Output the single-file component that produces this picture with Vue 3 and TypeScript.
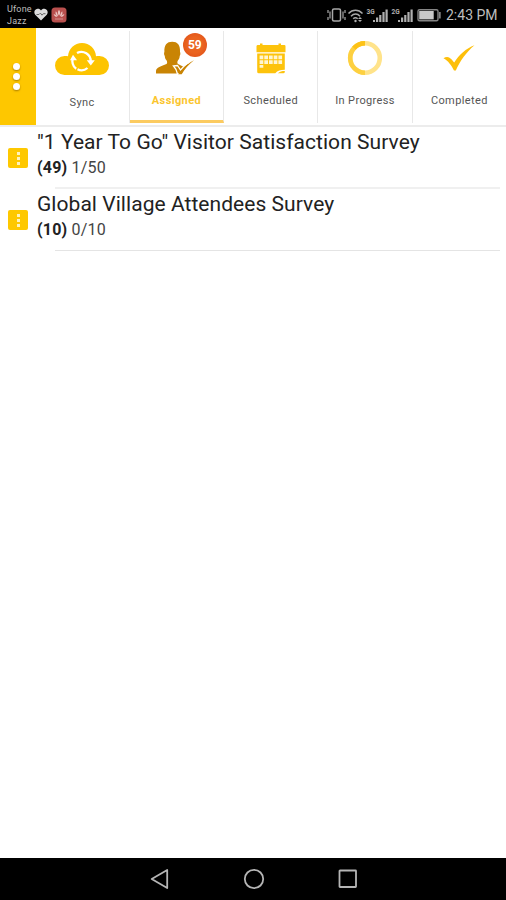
<script setup lang="ts">
interface Tab {
  id: string
  label: string
  badge?: number
}
interface Survey {
  title: string
  total: number
  progress: string
}

const active = 'assigned'
const tabs: Tab[] = [
  { id: 'sync', label: 'Sync' },
  { id: 'assigned', label: 'Assigned', badge: 59 },
  { id: 'scheduled', label: 'Scheduled' },
  { id: 'progress', label: 'In Progress' },
  { id: 'completed', label: 'Completed' },
]
const surveys: Survey[] = [
  { title: '"1 Year To Go" Visitor Satisfaction Survey', total: 49, progress: '1/50' },
  { title: 'Global Village Attendees Survey', total: 10, progress: '0/10' },
]
</script>

<template>
  <div class="screen">
    <header class="status">
      <div class="carriers"><span>Ufone</span><span>Jazz</span></div>
      <svg class="heart" width="14" height="13" viewBox="0 0 14 13">
        <path d="M7 12.5 1.2 6.8C-.6 4.5.5 1.2 3.5.8 5 .6 6.2 1.3 7 2.5 7.8 1.3 9 .6 10.5.8c3 .4 4.1 3.7 2.3 6z" fill="#dcdcdc" />
        <path d="M2.500 6.500h2.500l1.400-1.400L8 7.200l1.300-1.500h2.200" fill="none" stroke="#666" stroke-width="1" />
      </svg>
      <svg class="app" width="16" height="16" viewBox="0 0 16 16">
        <rect x=".5" y=".5" width="15" height="15" rx="3.5" fill="#b9504e" />
        <path d="M8 2.800c1.500 1.800 1.500 3.800 0 6-1.500-2.200-1.500-4.200 0-6zM4.800 4.200C6 5.500 6.800 7 7 9.200 4.800 8.500 4 6.500 4.800 4.200zM11.200 4.200C10 5.500 9.200 7 9 9.200c2.200-.7 3-2.700 2.200-5zM2.700 7c1.500.4 2.800 1.200 3.800 2.800C4.500 10 3 9 2.700 7zM13.300 7c-1.500.4-2.800 1.200-3.800 2.800 2 .2 3.500-.8 3.800-2.800z" fill="#edc5c2" />
        <path d="M4 12h8" stroke="#d38e8b" />
      </svg>
      <div class="spacer"></div>
      <svg class="system" width="116" height="18" viewBox="0 0 116 18">
        <g fill="none" stroke="#a8a8a8" stroke-width="1.500">
          <rect x="5.500" y="3" width="8" height="12" rx="1.500" />
          <path d="M3 5.500v7M1 4v3M1 11v3M16 5.500v7M18 4v3M18 11v3" stroke-width="1.200" />
          <path d="M21.500 7.500c4-4.200 10-4.200 14 0M24 10.200c2.800-2.800 6.500-2.800 9 0M26.200 12.800c1.500-1.500 3-1.500 4.500 0" />
        </g>
        <g fill="#b0b0b0">
          <circle cx="28.500" cy="15" r="1.200" />
          <path d="m31 13 2-2 2 2zM31 14h4l-2 2z" />
          <path d="M46 14h2v2h-2zM49 11.500h2.200V16H49zM52.200 9h2.200v7h-2.200zM55.400 6h2.200v10h-2.200zM58.500 3.500h2.200V16h-2.200z" />
          <path d="M71 14h2v2h-2zM74 11.500h2.200V16H74zM77.200 9h2.200v7h-2.200zM80.400 6h2.200v10h-2.200zM83.500 3.500h2.200V16h-2.200z" />
          <text x="39.500" y="8">3G</text>
          <text x="64.500" y="8">2G</text>
        </g>
        <rect x="91" y="3.700" width="20" height="11" rx="1.500" fill="none" stroke="#858585" stroke-width="1.400" />
        <rect x="92.200" y="5" width="14.500" height="8.400" fill="#c9c9c9" />
        <path d="M112.800 6v6.500" stroke="#858585" stroke-width="1.800" />
      </svg>
      <span class="clock">2:43 PM</span>
    </header>

    <nav class="toolbar">
      <button class="menu" aria-label="Menu"><i></i><i></i><i></i></button>
      <div v-for="tab in tabs" :key="tab.id" class="tab" :class="[tab.id, { active: tab.id === active }]">
        <div class="icon">
          <svg v-if="tab.id === 'sync'" width="54" height="34" viewBox="0 0 54 34">
            <path d="M9.500 33a9.500 9.500 0 0 1 0-19c1.200-.2 2.500 0 3.500.3C13.500 6.500 19.500 1 27 1s13.500 5.500 14 13.300c1-.3 2.300-.5 3.500-.3a9.500 9.500 0 0 1 0 19z" fill="#fdc400" />
            <g fill="none" stroke="#fff" stroke-width="2.300">
              <path d="M22 11.100a9.200 9.200 0 0 1 13.700 8.400" />
              <path d="M18.200 15.600a9.200 9.200 0 0 0 3 11.200M22.500 27.300a9.200 9.200 0 0 0 10-1.300" />
            </g>
            <path d="M31.800 18.200h8l-4 5.200zM15 18.200h7l-4-5.500z" fill="#fff" />
          </svg>
          <svg v-else-if="tab.id === 'assigned'" width="38" height="34" viewBox="0 0 38 34">
            <path d="M0 32.500v-2.300c0-4 5.500-5 10.500-7.200 1-1 .8-2.500-.2-4-1-.8-1.400-2.500-1.500-4-.8-1-1-3.200-.4-4C8 4 10.800.8 16.200.8S24.500 4 24 11c.6.800.5 3-.3 4-.1 1.500-.5 3.200-1.500 4-1 1.500-1.200 3-.2 4l5 2.500-1 7z" fill="#c98404" />
            <path d="m17.500 25 4-.5 3 4.500c3.500-4.200 8-7.500 13-9.500-5 4-8.500 8.500-11.500 13.500h-4.500c-.8-3.500-2-6-4-8z" fill="#c98404" stroke="#fff" stroke-width="1.300" />
            <path d="m25 29.800c4-4.500 8-8 13-10.500-5.500 4.200-9 8.500-12.300 14h-3.500z" fill="#c98404" />
          </svg>
          <svg v-else-if="tab.id === 'scheduled'" width="30" height="31" viewBox="0 0 30 31">
            <path d="M1.500 2H4V.5h2.500V2h16V.5H25V2h3a1.300 1.300 0 0 1 1.500 1.300v5.900H.5V3.300A1.300 1.300 0 0 1 1.500 2zM1.200 10.500h27.600v16.300c-4.300 0-7.300 1-9.500 3.400H2.700a1.500 1.500 0 0 1-1.500-1.500z" fill="#fdc30c" />
            <path d="M28.800 28c-2.800 0-5 .5-7 2.200h5.500a1.500 1.500 0 0 0 1.500-1.500z" fill="#fdc30c" />
            <path d="M8.300 12.500h3.700v3.700H8.300zM13 12.500h3.700v3.700H13zM17.700 12.500h3.700v3.700h-3.700zM22.400 12.500h3.700v3.700h-3.700zM3.600 17.200h3.700v3.700H3.600zM8.300 17.200h3.700v3.700H8.300zM13 17.200h3.700v3.700H13zM17.700 17.200h3.700v3.700h-3.700zM22.400 17.200h3.700v3.700h-3.700zM3.600 12.500h3.700v3.700H3.600zM3.600 21.900h3.700v2.800H3.600z" fill="#fff5d2" />
          </svg>
          <svg v-else-if="tab.id === 'progress'" width="36" height="36" viewBox="0 0 36 36">
            <circle cx="18" cy="18" r="14.800" fill="none" stroke="#ffe38a" stroke-width="4.600" />
            <path d="M18 32.800A14.800 14.800 0 0 1 18 3.200" fill="none" stroke="#fdd040" stroke-width="4.600" />
            <path d="M7 8.100A14.800 14.800 0 0 1 18 3.200" fill="none" stroke="#fdc216" stroke-width="4.600" />
          </svg>
          <svg v-else width="32" height="26" viewBox="0 0 32 26">
            <path d="M.5 13.200c2-1.400 4.500-1.600 6-.5 1.800 1.200 3.200 2.800 4.700 4.800C16 10 23 3.500 31.500.3 23.500 7 17 16 12.800 25.500H11C8.500 20.500 5 15.500.5 13.200z" fill="#fdbf0a" />
          </svg>
        </div>
        <span v-if="tab.badge" class="badge">{{ tab.badge }}</span>
        <span class="label">{{ tab.label }}</span>
      </div>
    </nav>

    <main class="list">
      <article v-for="survey in surveys" :key="survey.title" class="row">
        <div class="handle"><i></i><i></i><i></i></div>
        <div class="body">
          <h2>{{ survey.title }}</h2>
          <p><b>({{ survey.total }})</b> {{ survey.progress }}</p>
        </div>
      </article>
    </main>

    <footer class="navbar">
      <svg width="20" height="22" viewBox="0 0 20 22"><path d="M17.200 2v18L1.700 11z" /></svg>
      <svg width="22" height="22" viewBox="0 0 22 22"><circle cx="11" cy="11" r="9.200" /></svg>
      <svg width="20" height="20" viewBox="0 0 20 20"><rect x="1.500" y="1.500" width="16.500" height="16.500" rx=".5" /></svg>
    </footer>
  </div>
</template>

<style>
body {
  margin: 0;
}
</style>

<style scoped>
.screen {
  display: flex;
  flex-direction: column;
  width: 506px;
  height: 900px;
  overflow: hidden;
  background: #fff;
  font-family: Roboto, 'Liberation Sans', sans-serif;
}
.status {
  box-sizing: border-box;
  display: flex;
  flex: 0 0 28px;
  align-items: center;
  padding: 2px 8px 0 7px;
  background: #000;
  color: #bdbdbd;
}
.carriers {
  display: flex;
  flex-direction: column;
  width: 27px;
  font-size: 9px;
  line-height: 12.5px;
  letter-spacing: 0.2px;
}
.heart {
  margin-top: -1px;
}
.app {
  margin-left: 3px;
  margin-top: -1px;
}
.spacer {
  flex: 1;
}
.system {
  margin-top: -1px;
  margin-right: 3px;
}
.system text {
  font-size: 6.5px;
  font-weight: 700;
}
.clock {
  width: 52px;
  margin-top: -1px;
  font-size: 14px;
  white-space: nowrap;
}
.toolbar {
  display: flex;
  box-sizing: border-box;
  flex: 0 0 99px;
  border-bottom: 2px solid #ececec;
}
.menu {
  display: flex;
  flex: 0 0 35.5px;
  flex-direction: column;
  align-items: center;
  justify-content: center;
  gap: 3px;
  padding: 0 2px 0 0;
  border: 0;
  background: #fec700;
}
.menu i {
  width: 7px;
  height: 7px;
  border-radius: 50%;
  background: #fff;
  box-shadow: 0 1px 2px #a87b00;
}
.tab {
  position: relative;
  display: flex;
  box-sizing: border-box;
  flex: 1;
  flex-direction: column;
  align-items: center;
  height: 92px;
  margin-top: 3px;
  border-right: 1px solid #e8e8e8;
}
.tab:last-child {
  border-right: 0;
}
.icon {
  display: flex;
  align-items: center;
  justify-content: center;
  height: 54px;
}
.sync .icon {
  height: 56px;
}
.assigned .icon {
  height: 53px;
  padding-right: 2px;
}
.active {
  border-bottom: 3px solid #fccb60;
}
.badge {
  position: absolute;
  top: 2px;
  left: 53px;
  width: 24px;
  height: 24px;
  border-radius: 50%;
  background: radial-gradient(circle, #ea6420 0 45%, #de4a16 100%);
  color: #fff;
  font-size: 12px;
  font-weight: 700;
  line-height: 24px;
  text-align: center;
}
.label {
  margin-top: 9px;
  color: #555;
  font-size: 11px;
  line-height: 14px;
  letter-spacing: 0.38px;
  white-space: nowrap;
}
.active .label {
  margin-top: 10px;
  color: #fbc52d;
  font-weight: 700;
}
.row {
  display: flex;
  box-sizing: border-box;
  height: 62px;
  padding-left: 8px;
  background: linear-gradient(#e4e4e4, #e4e4e4) 47px 100% / 445px 1px no-repeat;
  background-origin: content-box;
}
.row:first-child {
  background-image: linear-gradient(#f0f0f0, #f0f0f0);
  background-size: 445px 2px;
}
.handle {
  display: flex;
  flex: 0 0 20px;
  flex-direction: column;
  align-items: center;
  justify-content: center;
  gap: 2px;
  height: 20px;
  margin: 21px 9px 0 0;
  border-radius: 2px;
  background: #fec800;
}
.handle i {
  width: 3px;
  height: 3px;
  background: #fff3bd;
}
h2 {
  margin: 2px 0 0;
  color: #222;
  font-size: 21px;
  font-weight: 400;
  line-height: 26px;
  letter-spacing: 0.05px;
  white-space: nowrap;
}
p {
  margin: 2px 0 0;
  color: #444;
  font-size: 16px;
  line-height: 21px;
  letter-spacing: 0.2px;
}
b {
  color: #222;
}
.navbar {
  display: flex;
  flex: 0 0 42px;
  align-items: center;
  justify-content: center;
  gap: 73px;
  padding-left: 1px;
  margin-top: auto;
  background: #000;
}
.navbar svg {
  fill: none;
  stroke: #b5b5b5;
  stroke-width: 1.8;
  stroke-linejoin: round;
}
</style>
